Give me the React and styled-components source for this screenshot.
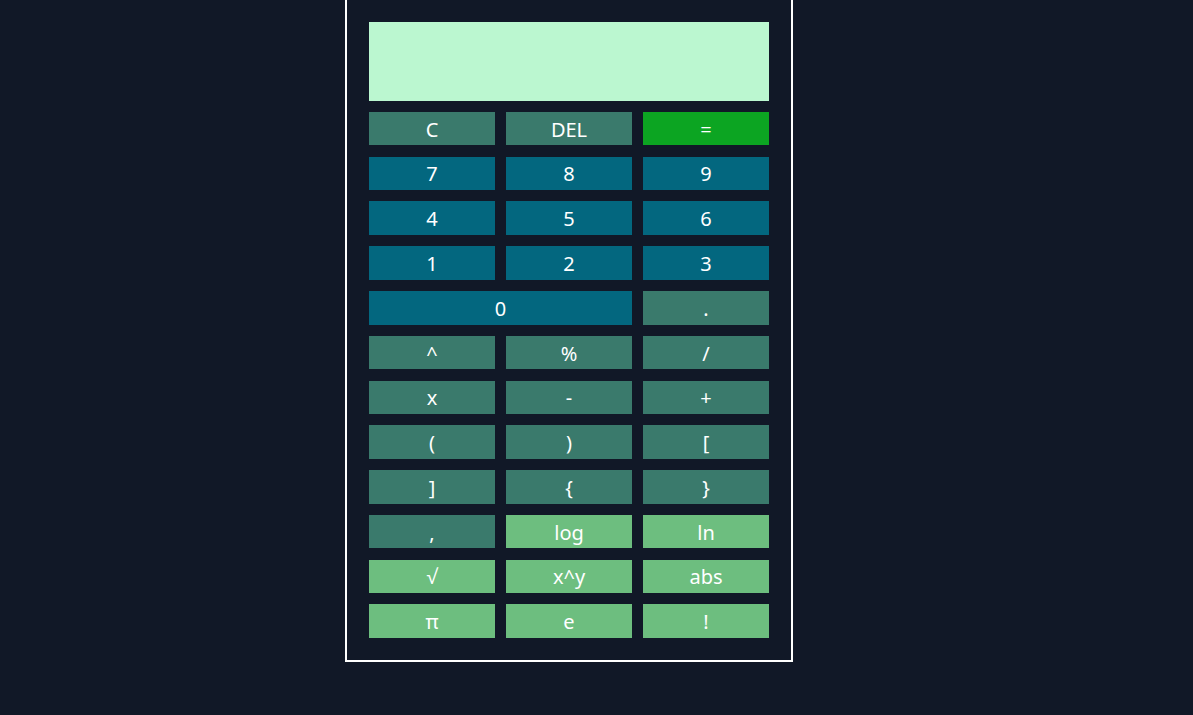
import React, { useState } from 'react';
import styled, { createGlobalStyle } from 'styled-components';

const Global = createGlobalStyle`
  html, body {
    margin: 0;
    background: #111827;
    font-family: "Noto Sans", "Open Sans", sans-serif;
  }
`;

const Page = styled.div`
  display: flex;
  justify-content: center;
  padding-right: 55px;
  min-height: 715px;
`;

const Calculator = styled.div`
  box-sizing: border-box;
  width: 448px;
  height: 664px;
  margin-top: -2px;
  padding: 22px;
  border: 2px solid #ffffff;
  display: flex;
  flex-direction: column;
  gap: 11px;
`;

const Display = styled.div`
  height: 79px;
  background: #bbf7d0;
  color: #111827;
  font-size: 28px;
  display: flex;
  align-items: center;
  justify-content: flex-end;
  padding: 0 12px;
`;

const Keys = styled.div`
  display: grid;
  grid-template-columns: repeat(3, 1fr);
  grid-auto-rows: 33.6px;
  gap: 11.2px 11px;
`;

const colors = {
  op: '#3a7a6c',
  num: '#03677f',
  eq: '#0ca522',
  fn: '#6dbe7f',
};

const Key = styled.button`
  border: none;
  margin: 0;
  padding: 2px 0 0;
  background: ${(p) => colors[p.$kind]};
  color: #ffffff;
  font-family: "Noto Sans", "Open Sans", sans-serif;
  font-size: 20px;
  line-height: 1;
  cursor: pointer;
  grid-column: span ${(p) => p.$span || 1};
`;

const keys = [
  ['C', 'op'], ['DEL', 'op'], ['=', 'eq'],
  ['7', 'num'], ['8', 'num'], ['9', 'num'],
  ['4', 'num'], ['5', 'num'], ['6', 'num'],
  ['1', 'num'], ['2', 'num'], ['3', 'num'],
  ['0', 'num', 2], ['.', 'op'],
  ['^', 'op'], ['%', 'op'], ['/', 'op'],
  ['x', 'op'], ['-', 'op'], ['+', 'op'],
  ['(', 'op'], [')', 'op'], ['[', 'op'],
  [']', 'op'], ['{', 'op'], ['}', 'op'],
  [',', 'op'], ['log', 'fn'], ['ln', 'fn'],
  ['√', 'fn'], ['x^y', 'fn'], ['abs', 'fn'],
  ['π', 'fn'], ['e', 'fn'], ['!', 'fn'],
];

export default function App() {
  const [value, setValue] = useState('');

  const press = (k) => {
    if (k === 'C') setValue('');
    else if (k === 'DEL') setValue((v) => v.slice(0, -1));
    else if (k === '=') {
      // nothing evaluated here, keep the expression
    } else setValue((v) => v + k);
  };

  return (
    <Page>
      <Global />
      <Calculator>
        <Display>{value}</Display>
        <Keys>
          {keys.map(([label, kind, span]) => (
            <Key key={label} $kind={kind} $span={span} onClick={() => press(label)}>
              {label}
            </Key>
          ))}
        </Keys>
      </Calculator>
    </Page>
  );
}
